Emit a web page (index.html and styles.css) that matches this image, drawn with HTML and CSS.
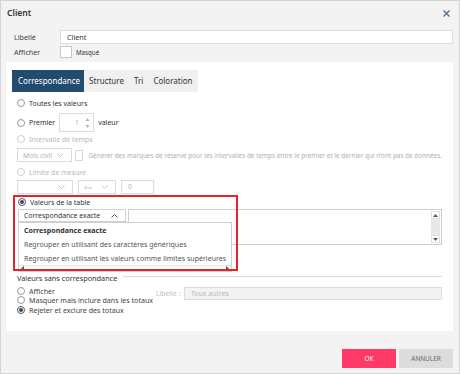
FILE: index.html
```html
<!DOCTYPE html>
<html lang="fr">
<head>
<meta charset="utf-8">
<title>Client</title>
<link rel="stylesheet" href="styles.css">
</head>
<body>
<div class="dialog">
  <header class="dlg-head">
    <span class="dlg-title">Client</span>
    <span class="close"><svg width="7" height="7" viewBox="0 0 7 7"><path d="M0.5 0.5L6.5 6.5M6.5 0.5L0.5 6.5" stroke="#4f6b86" stroke-width="1.2" fill="none"/></svg></span>
  </header>

  <div class="field-row">
    <span class="lbl">Libellé</span>
    <div class="text-input">Client</div>
  </div>
  <div class="field-row row-check">
    <span class="lbl">Afficher</span>
    <span class="checkbox"></span>
    <span class="check-text">Masqué</span>
  </div>

  <div class="panel">
    <div class="tabs">
      <div class="tab active">Correspondance</div>
      <div class="tab">Structure</div>
      <div class="tab">Tri</div>
      <div class="tab">Coloration</div>
    </div>

    <div class="content">
      <div class="opt opt-first"><span class="radio"></span>Toutes les valeurs</div>
      <div class="opt opt-premier"><span class="radio"></span>Premier
        <div class="spin"><span class="spin-val">1</span>
          <span class="spin-arrows">
            <svg width="5" height="12" viewBox="0 0 5 12"><path d="M2.5 1L4.5 4H0.5Z M2.5 11L4.5 8H0.5Z" fill="#b4b4b4"/></svg>
          </span>
        </div>
        valeur</div>
      <div class="opt disabled"><span class="radio"></span>Intervalle de temps</div>
      <div class="ctrl-row">
        <div class="select sel-mois"><span>Mois civil</span><svg width="7" height="4" viewBox="0 0 7 4"><path d="M0.5 0.5L3.5 3.5L6.5 0.5" stroke="#c4c4c4" fill="none"/></svg></div>
        <span class="checkbox small-check"></span>
        <span class="hint">Générer des marques de réserve pour les intervalles de temps entre le premier et le dernier qui n'ont pas de données.</span>
      </div>
      <div class="opt disabled opt-limite"><span class="radio"></span>Limite de mesure</div>
      <div class="ctrl-row row-limite">
        <div class="select sel-a"><span></span><svg width="7" height="4" viewBox="0 0 7 4"><path d="M0.5 0.5L3.5 3.5L6.5 0.5" stroke="#c4c4c4" fill="none"/></svg></div>
        <div class="select sel-b"><span>&gt;=</span><svg width="7" height="4" viewBox="0 0 7 4"><path d="M0.5 0.5L3.5 3.5L6.5 0.5" stroke="#c4c4c4" fill="none"/></svg></div>
        <div class="numbox">0</div>
      </div>

      <div class="table-values">
        <div class="opt opt-table"><span class="radio checked"></span>Valeurs de la table</div>
        <div class="tv-row">
          <div class="select sel-open"><span>Correspondance exacte</span><svg width="7" height="4" viewBox="0 0 7 4"><path d="M0.5 3.5L3.5 0.5L6.5 3.5" stroke="#555" fill="none"/></svg></div>
          <div class="listbox">
            <div class="vscroll">
              <span class="sb-btn"><svg width="5" height="3" viewBox="0 0 5 3"><path d="M2.5 0L5 3H0Z" fill="#555"/></svg></span>
              <span class="sb-track"></span>
              <span class="sb-btn"><svg width="5" height="3" viewBox="0 0 5 3"><path d="M2.5 3L5 0H0Z" fill="#555"/></svg></span>
            </div>
          </div>
        </div>
        <div class="menu">
          <div class="menu-item bold">Correspondance exacte</div>
          <div class="menu-item">Regrouper en utilisant des caractères génériques</div>
          <div class="menu-item">Regrouper en utilisant les valeurs comme limites supérieures</div>
          <div class="hscroll">
            <span class="hs-btn"><svg width="3" height="5" viewBox="0 0 3 5"><path d="M0 2.5L3 0V5Z" fill="#555"/></svg></span>
            <span class="hs-track"></span>
            <span class="hs-btn"><svg width="3" height="5" viewBox="0 0 3 5"><path d="M3 2.5L0 0V5Z" fill="#555"/></svg></span>
          </div>
        </div>
        <div class="highlight"></div>
      </div>

      <div class="legend-row"><span>Valeurs sans correspondance</span><span class="rule"></span></div>
      <div class="nomatch">
        <div class="nm-radios">
          <div class="nm-opt"><span class="radio"></span>Afficher</div>
          <div class="nm-opt"><span class="radio"></span>Masquer mais inclure dans les totaux</div>
          <div class="nm-opt"><span class="radio checked"></span>Rejeter et exclure des totaux</div>
        </div>
        <div class="nm-label">
          <span class="nm-lbl">Libellé :</span>
          <div class="nm-input">Tous autres</div>
        </div>
      </div>
    </div>
  </div>

  <footer class="dlg-foot">
    <span class="btn btn-ok">OK</span>
    <span class="btn btn-cancel">ANNULER</span>
  </footer>
</div>
</body>
</html>
```

FILE: styles.css
```css
* { box-sizing: border-box; margin: 0; padding: 0; }
html, body { width: 460px; height: 374px; overflow: hidden; }
body {
  font-family: "Noto Sans", "Open Sans", sans-serif;
  font-size: 7px;
  color: #333;
  background: #f3f3f3;
  white-space: nowrap;
}
.dialog {
  width: 460px;
  height: 374px;
  border: 1px solid #d4d4d4;
  background: #f3f3f3;
  display: flex;
  flex-direction: column;
}
.dlg-head {
  height: 24px;
  display: flex;
  align-items: center;
  justify-content: space-between;
  padding: 0 9px 0 6px;
}
.dlg-title { font-size: 8.6px; font-weight: 600; color: #333; }
.close { display: flex; }

.field-row {
  display: flex;
  align-items: center;
  margin: 5px 6px 0 13px;
  height: 14px;
}
.lbl { width: 46px; font-size: 7.2px; color: #444; }
.text-input {
  flex: 1;
  height: 14px;
  background: #fff;
  border: 1px solid #dedede;
  padding-left: 6px;
  line-height: 12px;
  font-size: 7.2px;
}
.row-check { margin-top: 2px; height: 12px; }
.checkbox {
  width: 12px; height: 12px;
  background: #fff;
  border: 1px solid #c8c8c8;
  display: inline-block;
}
.check-text { font-size: 6.2px; margin-left: 4px; }

.panel {
  margin: 4px 6px 0 5px;
  height: 269px;
  background: #fff;
  padding: 8px 11px 0 6px;
}
.tabs {
  display: inline-flex;
  background: #f0f0f0;
  height: 22px;
}
.tab {
  font-size: 8px;
  line-height: 22px;
  padding: 0 5px;
  color: #333;
}
.tab.active { background: #234b70; color: #fff; padding: 0 4px 0 6px; }

.content { padding-left: 5px; }
.opt {
  display: flex;
  align-items: center;
  height: 14px;
  font-size: 7px;
  color: #333;
}
.opt-first { margin-top: 4px; }
.radio {
  width: 8px; height: 8px;
  border: 1px solid #9a9a9a;
  border-radius: 50%;
  margin-right: 4px;
  flex: none;
  background: #fff;
  position: relative;
}
.radio.checked { border-color: #555; }
.radio.checked::after {
  content: "";
  position: absolute;
  left: 1px; top: 1px;
  width: 4px; height: 4px;
  border-radius: 50%;
  background: #2a4d72;
}
.disabled { color: #b8b8b8; }
.disabled .radio { border-color: #cfcfcf; }

.opt-premier { height: 19px; margin-top: 3px; }
.spin {
  width: 35px; height: 19px;
  border: 1px solid #dcdcdc;
  margin: 0 4px 0 4px;
  display: flex;
  align-items: center;
  justify-content: flex-end;
  padding-right: 3px;
  color: #b5b5b5;
}
.spin-val { margin-right: 6px; }
.spin-arrows { display: flex; }

.ctrl-row { display: flex; align-items: center; margin-top: 2px; height: 14px; }
.select {
  height: 14px;
  border: 1px solid #dcdcdc;
  display: flex;
  align-items: center;
  justify-content: space-between;
  padding: 0 7px 0 5px;
  color: #b5b5b5;
  font-size: 6.8px;
}
.sel-mois { width: 67px; }
.small-check { width: 11px; height: 11px; margin-left: 3px; border-color: #d8d8d8; }
.hint { font-size: 6.4px; color: #b0b0b0; margin-left: 5px; }
.opt-limite { margin-top: 3px; }
.row-limite { margin-top: 1px; }
.sel-a { width: 56px; }
.sel-b { width: 38px; margin-left: 5px; }
.numbox {
  width: 33px; height: 14px;
  border: 1px solid #dcdcdc;
  margin-left: 5px;
  padding-left: 6px;
  line-height: 12px;
  color: #b5b5b5;
}

.table-values { position: relative; margin-top: 1px; }
.opt-table .radio { margin-left: 1px; }
.tv-row { display: flex; align-items: flex-start; }
.sel-open {
  width: 108px;
  height: 13px;
  margin-left: 1px;
  color: #333;
  border-color: #d0d0d0;
  padding: 0 7px 0 5px;
  font-size: 6.9px;
}
.listbox {
  flex: 1;
  margin-left: 2px;
  height: 36px;
  border: 1px solid #cdcdcd;
  display: flex;
  justify-content: flex-end;
}
.vscroll {
  width: 9px;
  display: flex;
  flex-direction: column;
  background: #e8e8e8;
  margin: 1px 1px 1px 0;
}
.sb-btn {
  height: 8px;
  background: #fff;
  border: 1px solid #e0e0e0;
  display: flex;
  align-items: center;
  justify-content: center;
}
.sb-track { flex: 1; }

.menu {
  position: absolute;
  left: 1px;
  top: 27px;
  width: 214px;
  background: #fff;
  border: 1px solid #cfcfcf;
  z-index: 2;
}
.menu-item {
  height: 14px;
  line-height: 14px;
  padding-left: 5px;
  font-size: 7.05px;
  color: #555;
}
.menu-item.bold { font-weight: 700; color: #333; }
.hscroll {
  height: 6px;
  display: flex;
  border-top: 1px solid #e6e6e6;
}
.hs-btn {
  width: 7px;
  display: flex;
  align-items: center;
  justify-content: center;
}
.hs-track { flex: 1; }
.highlight {
  position: absolute;
  left: -4px;
  top: 0;
  width: 225px;
  height: 76px;
  border: 2px solid #e8222c;
  z-index: 3;
  pointer-events: none;
}

.legend-row {
  display: flex;
  align-items: center;
  margin-top: 27px;
  height: 12px;
  font-size: 7.3px;
  color: #333;
}
.rule { flex: 1; height: 1px; background: #dcdcdc; margin-left: 6px; margin-top: -3px; }

.nomatch { display: flex; align-items: flex-start; margin-top: 2px; }
.nm-radios { width: 139px; }
.nm-opt {
  display: flex;
  align-items: center;
  height: 9.5px;
  font-size: 7.1px;
  color: #444;
}
.nm-opt .radio { margin-right: 4px; }
.nm-label { flex: 1; display: flex; align-items: center; margin-top: 1px; }
.nm-lbl { color: #bdbdbd; width: 28px; font-size: 6.8px; }
.nm-input {
  flex: 1;
  height: 13px;
  background: #f3f3f3;
  border: 1px solid #dcdcdc;
  padding-left: 6px;
  line-height: 11px;
  color: #b8b8b8;
  font-size: 7px;
}

.dlg-foot {
  display: flex;
  justify-content: flex-end;
  gap: 3px;
  padding-right: 6px;
  margin-top: 18px;
}
.btn {
  width: 54px;
  height: 19px;
  display: flex;
  align-items: center;
  justify-content: center;
  font-size: 6.4px;
}
.btn-ok { background: #ff3a68; color: #fff; }
.btn-cancel { background: #dcdcdc; color: #666; }
```
